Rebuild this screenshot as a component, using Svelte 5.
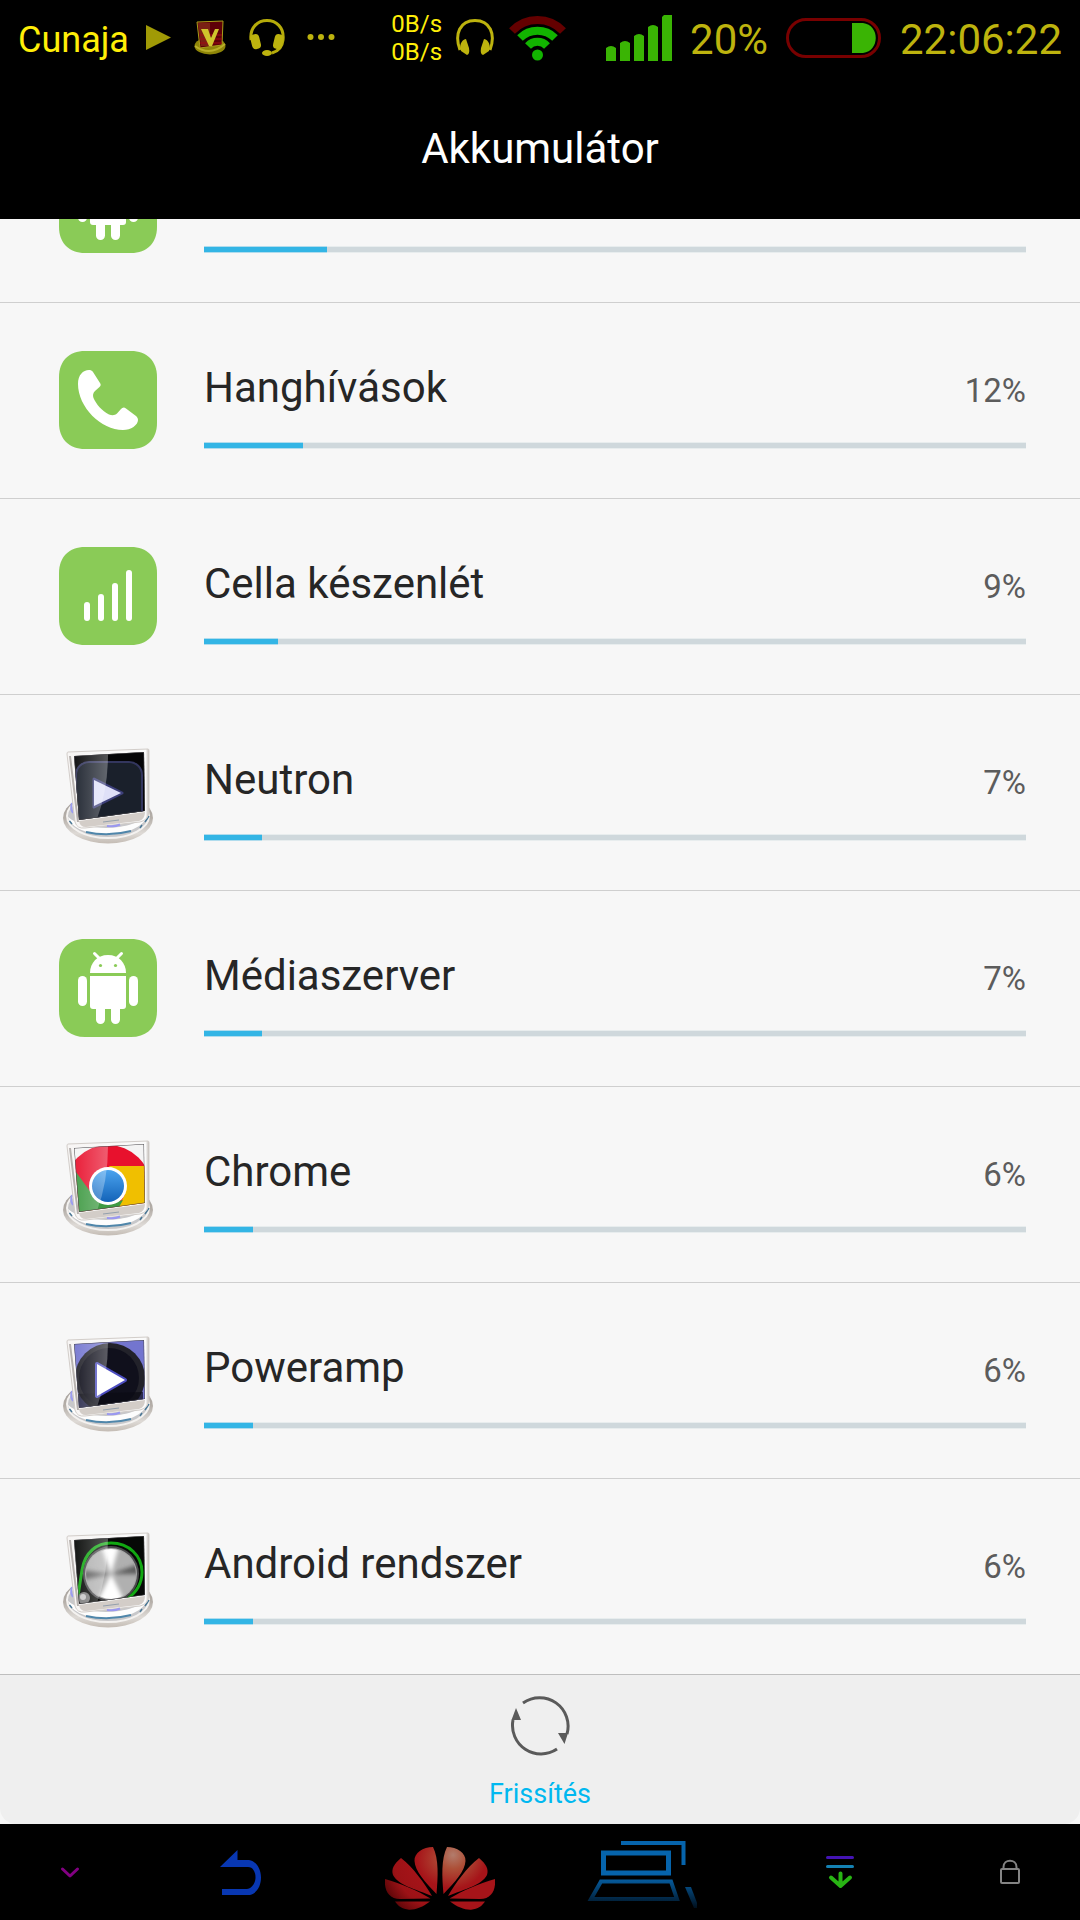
<script>
  const apps = [
    { icon: 'android', name: '', percent: 15 },
    { icon: 'phone', name: 'Hanghívások', percent: 12 },
    { icon: 'signal', name: 'Cella készenlét', percent: 9 },
    { icon: 'neutron', name: 'Neutron', percent: 7 },
    { icon: 'android', name: 'Médiaszerver', percent: 7 },
    { icon: 'chrome', name: 'Chrome', percent: 6 },
    { icon: 'poweramp', name: 'Poweramp', percent: 6 },
    { icon: 'knob', name: 'Android rendszer', percent: 6 }
  ];
</script>

{#snippet monitorBase()}
  <ellipse cx="49" cy="74" rx="45" ry="25.5" fill="url(#ring)" />
  <ellipse cx="49" cy="72" rx="41" ry="22" fill="#c8c8ca" stroke="#f4f2f0" stroke-width="2" />
  <path d="M9 73 C16 97 82 97 90 69 C78 86 30 90 9 73Z" fill="#fdfdfd" />
  <path d="M27 88 Q49 93 72 87" fill="none" stroke="#4f86aa" stroke-width="2" />
  <path d="M13 59 Q11 65 14 69" fill="none" stroke="#9c9df0" stroke-width="2" />
  <path d="M10.500 77 L13 80 M81 84 L83 81 M86 78 L90 72" stroke="#4a7896" stroke-width="1.500" />
  <path d="M9 8 L89 5 Q90 5 90 7 L90 66 Q90 76 81 78 L26 84 Q18 85 16 78 L8 10 Q8 8 9 8Z" fill="url(#frame)" stroke="#d2cdc9" stroke-width="1" />
  <path d="M11 12 L19 78" stroke="#8d8682" stroke-width="2" opacity=".6" />
  <path d="M20 77 L86 68 Q86 75 80 77 L27 83 Q21 83 20 77Z" fill="#d3cdc8" />
  <path d="M44 78 L60 76" stroke="#93a0ad" stroke-width="1" />
  <path d="M48 82 Q56 83 61 80.500" fill="none" stroke="#9a98f0" stroke-width="2" />
{/snippet}

{#snippet gloss()}
  <path d="M14 11 L49 10 Q49 45 38 75 L20 77Z" fill="url(#gloss)" />
  <path d="M15 12 L85 8 L86 67 L20 76Z" fill="none" stroke="#4c4a4e" stroke-width="1" />
{/snippet}

{#snippet appIcon(kind)}
  <svg class="icon" viewBox="0 0 98 98" aria-hidden="true">
    {#if kind === 'android' || kind === 'phone' || kind === 'signal'}
      <path d="M26 0 H72 C88 0 98 10 98 26 V72 C98 88 88 98 72 98 H26 C10 98 0 88 0 72 V26 C0 10 10 0 26 0Z" fill="#8acb57" />
    {/if}
    {#if kind === 'android'}
      <g fill="#fff">
        <path d="M31 34 C31 24 38 16 49 16 C60 16 67 24 67 34Z" />
        <path d="M31 37 H67 V67 Q67 70 64 70 H34 Q31 70 31 67Z" />
        <rect x="19" y="37" width="9" height="30" rx="4.5" />
        <rect x="70" y="37" width="9" height="30" rx="4.5" />
        <rect x="37" y="62" width="9" height="23" rx="4.5" />
        <rect x="52" y="62" width="9" height="23" rx="4.5" />
      </g>
      <path d="M35.5 14.5 L41 20 M62.5 14.5 L57 20" stroke="#fff" stroke-width="3" stroke-linecap="round" />
      <circle cx="41.5" cy="26.5" r="1.6" fill="#8acb57" />
      <circle cx="56.5" cy="26.5" r="1.6" fill="#8acb57" />
    {:else if kind === 'phone'}
      <path fill="#fff" d="M30 19 C24 19 19 24 19 33 C19 56 42 79 64 79 C72 79 79 74 79 69 C79 67 78 66 77 65 L67 57.500 C65 56 63.500 56.500 62 58 L58 62.500 C56 64.500 53 64.500 50 63.500 C43 60 37 53 34.500 47 C33.500 44 34 42 36 40 L40.500 36 C42 34.500 42 33.500 41 32 L34 21 C33 19.500 31.500 19 30 19Z" />
    {:else if kind === 'signal'}
      <g fill="#fff">
        <rect x="25" y="55" width="6" height="19" rx="3" />
        <rect x="39" y="47" width="6" height="27" rx="3" />
        <rect x="53" y="36" width="6" height="38" rx="3" />
        <rect x="67" y="23" width="6" height="51" rx="3" />
      </g>
    {:else}
      <g transform="translate(0 1)">
      {@render monitorBase()}
      <g clip-path="url(#screen)">
        {#if kind === 'neutron'}
          <rect width="98" height="98" fill="#050507" />
          <rect x="17" y="18" width="66" height="80" rx="13" fill="#1a202b" stroke="#33365e" stroke-width="2" />
          <path d="M35 35 L63 49 L35 63Z" fill="#6e6fe0" stroke="#5556b0" stroke-width="3" stroke-linejoin="round" opacity=".6" />
          <path d="M35 36 L62 49 L35 62Z" fill="#dfe0f8" />
        {:else if kind === 'chrome'}
          <rect width="98" height="98" fill="#f4f4f4" />
          <circle cx="49" cy="52" r="43" fill="#e8112d" />
          <path d="M50 30 H92 V80 H55 L66 58Z" fill="#f0bf00" />
          <path d="M12 29 L33 58 L49 68 L64 64 L54 82 H12Z" fill="#3f9a43" />
          <circle cx="49" cy="50" r="19" fill="#fff" />
          <circle cx="49" cy="50" r="16" fill="url(#blue)" />
        {:else if kind === 'poweramp'}
          <rect width="98" height="98" fill="#7375cf" />
          <circle cx="51" cy="46" r="35" fill="#22222a" />
          <circle cx="50" cy="46" r="30" fill="#10101c" />
          <path d="M16 62 L84 60 V80 H16Z" fill="#0c0c14" opacity=".7" />
          <path d="M38 32 L66 48 L38 64Z" fill="#fff" stroke="#4c4dc0" stroke-width="4" stroke-linejoin="round" paint-order="stroke" />
        {:else}
          <rect width="98" height="98" fill="#060806" />
          <path d="M19 68 L23 42 C26 24 38 15 52 15 C70 15 83 28 83 44 C83 55 78 64 68 71" fill="none" stroke="#12a812" stroke-width="3" />
          <circle cx="52" cy="46" r="28" fill="#4a4a4c" />
          <circle cx="52" cy="46" r="26" fill="#a8a8a8" />
          <g clip-path="url(#dial)">
            <circle cx="52" cy="46" r="25" fill="#b0b0b0" />
            <g filter="url(#soft)">
              <path d="M52 46 L42 18 H60Z M52 46 L38 74 H66Z" fill="#fff" />
              <path d="M52 46 L24 42 V52Z M52 46 L80 36 V46Z" fill="#5c5c5c" />
            </g>
          </g>
          <circle cx="25" cy="70" r="6" fill="#7c7c7c" />
          <circle cx="24" cy="69" r="3" fill="#c8c8c8" />
        {/if}
        {@render gloss()}
      </g>
      </g>
    {/if}
  </svg>
{/snippet}

<svg class="defs" aria-hidden="true">
  <defs>
    <clipPath id="screen"><path d="M15 12 L85 8 L86 67 L20 76Z" /></clipPath>
    <clipPath id="dial"><circle cx="52" cy="46" r="25" /></clipPath>
    <filter id="soft" x="-20%" y="-20%" width="140%" height="140%"><feGaussianBlur stdDeviation="2" /></filter>
    <linearGradient id="ring" x1="0" y1="0" x2="0" y2="1">
      <stop offset="0" stop-color="#9b9692" />
      <stop offset=".5" stop-color="#b5afa9" />
      <stop offset=".8" stop-color="#dedad6" />
      <stop offset="1" stop-color="#c4bcb4" />
    </linearGradient>
    <linearGradient id="frame" x1="0" y1="0" x2="1" y2="0">
      <stop offset="0" stop-color="#f7f5f4" />
      <stop offset=".9" stop-color="#fafafa" />
      <stop offset=".96" stop-color="#fafafa" />
      <stop offset="1" stop-color="#bdb7b2" />
    </linearGradient>
    <linearGradient id="gloss" x1="0" y1="0" x2="1" y2="0">
      <stop offset="0" stop-color="#fff" stop-opacity="0.05" />
      <stop offset="1" stop-color="#fff" stop-opacity=".32" />
    </linearGradient>
    <linearGradient id="blue" x1="0" y1="0" x2="0" y2="1">
      <stop offset="0" stop-color="#4aa3ee" />
      <stop offset="1" stop-color="#1463b8" />
    </linearGradient>
    <radialGradient id="petalLit" gradientUnits="userSpaceOnUse" cx="42" cy="8" r="34">
      <stop offset="0" stop-color="#b27c6c" />
      <stop offset=".4" stop-color="#ad5038" />
      <stop offset="1" stop-color="#a61419" />
    </radialGradient>
    <radialGradient id="petal" gradientUnits="userSpaceOnUse" cx="58" cy="12" r="66">
      <stop offset="0" stop-color="#b05038" />
      <stop offset=".4" stop-color="#a61419" />
      <stop offset=".75" stop-color="#9c1216" />
      <stop offset="1" stop-color="#5c0608" />
    </radialGradient>
    <linearGradient id="fade" gradientUnits="userSpaceOnUse" x1="0" y1="52" x2="0" y2="86">
      <stop offset="0" stop-color="#0664ac" />
      <stop offset="1" stop-color="#000a14" />
    </linearGradient>
    <g id="petals">
      <path d="M48 0 C38 0 29 6 29.500 14 C30 24 40 35 51.500 47 C53 30 54 12 48 0Z" />
      <path d="M16 11 C9 17 6 22 8 28 C13 38 30 42 47 49 C40 37 28 20 16 11Z" />
      <path d="M0 32 C-1 42 3 52 15 52 L45.500 51.500 C33 44 15 36 0 32Z" />
      <path d="M10 54.500 H45 C38 60 30 63 24 62.700 C17 62 13 59 10 54.500Z" />
    </g>
  </defs>
</svg>

<div class="phone">
  <div class="status">
    <div class="notices">
      <span class="carrier">Cunaja</span>
      <svg width="26" height="40" viewBox="144 18 26 40"><path d="M145 25 L170 37.500 L145 50Z" fill="#a09a06" /></svg>
      <svg width="34" height="40" viewBox="194 18 34 40">
        <ellipse cx="211" cy="46" rx="15.500" ry="8.500" fill="#8e8508" />
        <path d="M196 46 Q211 57 226 44" fill="none" stroke="#b8ae28" stroke-width="2" />
        <path d="M198 22 L224 21 L223 45 L201 48Z" fill="#5e0008" stroke="#a89e18" stroke-width="1" />
        <path d="M199 23 H211 V46 L202 46Z" fill="#7a2014" />
        <path d="M201 35 H223 M201 39 H223 M201 43 H223" stroke="#a00a12" stroke-width="1" />
        <path d="M202 29 H209 L212 38 L216 29 H220 L213 46 H210Z" fill="#d0c42c" />
      </svg>
      <svg width="36" height="40" viewBox="247 18 36 40">
        <path d="M249 40 C246 14 284 14 281 40 Q280 50 270 53" fill="none" stroke="#b5ab0a" stroke-width="3" />
        <rect x="249" y="34" width="9" height="15" rx="4" fill="#bdb30e" transform="rotate(-14 254 41)" />
        <rect x="272" y="34" width="9" height="15" rx="4" fill="#bdb30e" transform="rotate(14 276 41)" />
        <ellipse cx="265" cy="53" rx="5" ry="3" fill="#bdb30e" />
      </svg>
      <svg width="28" height="40" viewBox="305 18 28 40" fill="#bdb30e"><circle cx="308.500" cy="37" r="3" /><circle cx="319" cy="37" r="3" /><circle cx="329.500" cy="37" r="3" /></svg>
    </div>
    <div class="network">
      <div class="speed"><span>0B/s</span><span>0B/s</span></div>
      <svg width="38" height="40" viewBox="452 18 38 40">
        <path d="M456 50 C450 34 456 20.500 471 20.500 C486 20.500 492 34 486 50" fill="none" stroke="#bdb30e" stroke-width="3" />
        <path d="M462 39 C457 40 455 46 457 51 L463 55 Q466 54 465 48Z M480 39 C485 40 487 46 485 51 L479 55 Q476 54 477 48Z" fill="#bdb30e" />
      </svg>
      <svg width="60" height="46" viewBox="508 14 60 46" fill="none" stroke-width="8">
        <path d="M512 30 A35 35 0 0 1 563 30" stroke="#640000" />
        <path d="M520 37 A25 25 0 0 1 555 37" stroke="#12b400" />
        <path d="M528 45 A13 13 0 0 1 547 45" stroke="#12b400" />
        <circle cx="537.500" cy="54" r="5.500" fill="#12b400" stroke="none" />
      </svg>
    </div>
    <div class="system">
      <svg width="66" height="46" viewBox="606 14 66 46" fill="#3ab404">
        <path d="M606 60 V47 Q611 43 616 47 V60Z M620 60 V42 Q625 38 630 42 V60Z M634 60 V35 Q639 31 644 35 V60Z M648 60 V26 Q653 22 658 26 V60Z M662 60 V16 L664 14 H672 V60Z" />
      </svg>
      <span class="level">20%</span>
      <svg width="96" height="42" viewBox="786 17 96 42">
        <rect x="787.500" y="19.500" width="92" height="37" rx="18.500" fill="none" stroke="#780000" stroke-width="3" />
        <path d="M852 23 H863 C880 25 880 51 863 53 H852Z" fill="#3ab404" />
      </svg>
      <time class="clock">22:06:22</time>
    </div>
  </div>

  <header><h1>Akkumulátor</h1></header>

  <ul class="list">
    {#each apps as app}
      <li>
        {@render appIcon(app.icon)}
        <div class="info">
          <div class="line">
            <span class="name">{app.name}</span>
            {#if app.name}<span class="percent">{app.percent}%</span>{/if}
          </div>
          <div class="track"><div class="fill" style:width="{app.percent}%"></div></div>
        </div>
      </li>
    {/each}
  </ul>

  <div class="actions">
    <button class="refresh">
      <svg width="60" height="60" viewBox="0 0 60 60">
        <path d="M13 7 A28.500 28.500 0 0 1 57 38 M47 53 A28.500 28.500 0 0 1 3 24" fill="none" stroke="#5a5a5a" stroke-width="3" />
        <path d="M48 37 H58 L54.500 48Z M1.500 24 H11 L6 12Z" fill="#5a5a5a" />
      </svg>
      <span>Frissítés</span>
    </button>
  </div>

  <nav>
    <button aria-label="Elrejtés">
      <svg width="20" height="96" viewBox="0 0 20 96"><path d="M2.500 45 L10 52 L17.500 45" fill="none" stroke="#820082" stroke-width="3" stroke-linecap="round" stroke-linejoin="round" /></svg>
    </button>
    <button aria-label="Vissza">
      <svg width="41" height="96" viewBox="0 0 41 96"><path d="M0 43 L17.500 26 V36 H29 C36 37 41 45 41 53.500 C41 62 37 69 30 71 H2 V65 H27 C33 64 35.500 58 35.500 53.500 C35.500 48 33 43 28 43Z" fill="#0837b2" /></svg>
    </button>
    <button aria-label="Kezdőlap">
      <svg width="110" height="96" viewBox="0 -23 110 96">
        <use href="#petals" fill="url(#petal)" />
        <use href="#petals" fill="url(#petalLit)" transform="matrix(-1 0 0 1 110 0)" />
      </svg>
    </button>
    <button aria-label="Legutóbbiak">
      <svg width="114" height="96" viewBox="-4 0 114 96" fill="none">
        <path d="M34 19 H96.500 V41" stroke="#0664ac" stroke-width="4" />
        <rect x="16.500" y="29" width="65" height="20" stroke="#0664ac" stroke-width="5" />
        <path d="M14 57.500 H84 L90 75 H4Z" stroke="url(#fade)" stroke-width="4" />
        <path d="M98 63 H104 L112 84 H107Z" fill="url(#fade)" />
      </svg>
    </button>
    <button aria-label="Értesítések">
      <svg width="28" height="96" viewBox="0 0 28 96" fill="none" stroke-linecap="round" stroke-linejoin="round">
        <path d="M1.500 33.500 H26.500" stroke="#4414b4" stroke-width="3" />
        <path d="M1.500 42.500 H26.500" stroke="#1482b4" stroke-width="3" />
        <path d="M14.500 49.500 V62 M5 53.500 L14.500 62 L24 53.500" stroke="#28b414" stroke-width="4" />
      </svg>
    </button>
    <button aria-label="Zárolás">
      <svg width="20" height="96" viewBox="0 0 20 96" fill="none" stroke="#848484" stroke-width="2">
        <rect x="1" y="45" width="18" height="14" rx="1" />
        <path d="M3.500 45 V43 C3.500 34.500 16.500 34.500 16.500 43 V45" />
      </svg>
    </button>
  </nav>
</div>

<style>
  :global(body) {
    margin: 0;
    background: #000;
    font-family: Roboto, sans-serif;
  }
  svg {
    display: block;
    flex: none;
  }
  .defs {
    position: absolute;
    width: 0;
    height: 0;
  }
  button {
    border: 0;
    padding: 0;
    background: none;
    font: inherit;
    cursor: pointer;
  }
  .phone {
    display: flex;
    flex-direction: column;
    height: 100vh;
    overflow: hidden;
  }
  .status {
    display: flex;
    align-items: center;
    box-sizing: border-box;
    height: 76px;
    padding: 0 18px 0 18px;
    background: #000;
    color: #bdb30e;
  }
  .notices,
  .network,
  .system {
    display: flex;
    align-items: center;
  }
  .notices {
    gap: 22px;
  }
  .network {
    gap: 14px;
    margin-left: auto;
  }
  .system {
    gap: 18px;
    margin-left: 38px;
  }
  .carrier {
    margin-right: -6px;
    padding-top: 4px;
    color: #ffee08;
    font-size: 36px;
    line-height: 42px;
  }
  .speed {
    display: flex;
    flex-direction: column;
    color: #ffee08;
    font-size: 24px;
    line-height: 28px;
  }
  .level,
  .clock {
    padding-top: 4px;
    font-size: 42px;
    line-height: 50px;
  }
  header {
    display: flex;
    align-items: center;
    justify-content: center;
    box-sizing: border-box;
    height: 143px;
    padding-top: 2px;
    background: #000;
  }
  h1 {
    margin: 0;
    color: #fff;
    font-size: 42px;
    font-weight: 400;
    line-height: 50px;
  }
  .list {
    display: flex;
    flex: 1;
    flex-direction: column;
    justify-content: flex-end;
    min-height: 0;
    margin: 0;
    padding: 0;
    overflow: hidden;
    background: #f7f7f7;
    list-style: none;
  }
  li {
    display: flex;
    flex: none;
    gap: 47px;
    box-sizing: border-box;
    height: 196px;
    padding: 0 54px 0 59px;
    border-bottom: 1px solid #cfcfcf;
  }
  li:last-child {
    border-color: #bebebe;
  }
  .icon {
    width: 98px;
    height: 98px;
    margin-top: 48px;
    overflow: visible;
  }
  .info {
    flex: 1;
    padding-top: 60px;
  }
  .line {
    display: flex;
    align-items: baseline;
    justify-content: space-between;
    height: 50px;
    margin-bottom: 29px;
    line-height: 50px;
  }
  .name {
    color: #262626;
    font-size: 42px;
  }
  .percent {
    color: #5c5c5c;
    font-size: 33px;
  }
  .track {
    height: 7px;
    background: linear-gradient(#e8edee 1px, #cfd8dc 1px, #cfd8dc 6px, #e8edee 6px);
  }
  .fill {
    height: 7px;
    background: linear-gradient(#b0dced 1px, #33b5e5 1px, #33b5e5 6px, #b0dced 6px);
  }
  .actions {
    background: #f7f7f7;
  }
  .refresh {
    display: flex;
    flex-direction: column;
    align-items: center;
    gap: 21px;
    box-sizing: border-box;
    width: 100%;
    height: 149px;
    padding-top: 21px;
    border-radius: 0 0 16px 16px;
    background: #efefef;
    color: #00b8f0;
    font-size: 27px;
    line-height: 34px;
  }
  nav {
    display: grid;
    grid-template-columns: 7fr 10fr 10fr 10fr 10fr 7fr;
    height: 96px;
    background: #000;
  }
  nav button {
    display: flex;
    justify-content: center;
  }
</style>
